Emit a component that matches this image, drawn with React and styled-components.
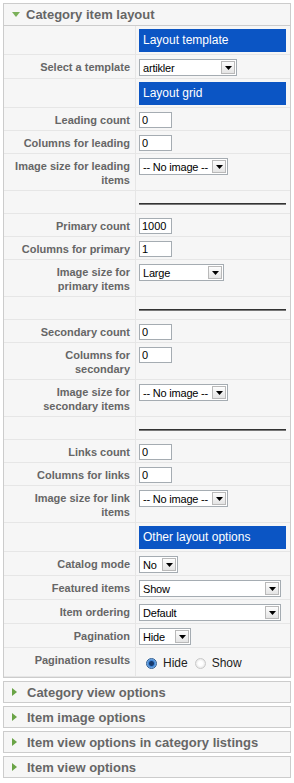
import styled, { createGlobalStyle } from 'styled-components';

const GlobalStyle = createGlobalStyle`
  body {
    margin: 3px;
    background: #fff;
    font-family: "Liberation Sans", Arial, sans-serif;
    font-size: 11px;
    color: #333;
  }
`;

const Panel = styled.div`
  border: 1px solid #ccc;
  margin-bottom: 3px;
  background: #f6f6f6;
`;

const PanelTitle = styled.h3`
  margin: 0;
  height: ${(p) => (p.$open ? '21px' : '20px')};
  display: flex;
  align-items: center;
  gap: ${(p) => (p.$open ? '6px' : '10px')};
  padding-left: 8px;
  font-size: 13px;
  font-weight: bold;
  color: #666;
  border-bottom: ${(p) => (p.$open ? '1px solid #ccc' : 'none')};
`;

const Row = styled.div`
  display: flex;
`;

const Key = styled.div`
  width: 126px;
  flex-shrink: 0;
  padding: 5px 5px 3px 0;
  text-align: right;
  font-weight: bold;
  color: #666;
  line-height: 14px;
  white-space: pre-line;
  border-right: 1px solid #e6e6e6;
  border-bottom: 1px solid #e6e6e6;
`;

const Value = styled.div`
  flex: 1;
  min-width: 0;
  padding: ${(p) => (p.$bar ? '3px 4px 2px 3px' : '4px 4px 2px 3px')};
  border-bottom: 1px solid #e6e6e6;
`;

const SectionBar = styled.div`
  height: 23px;
  line-height: 23px;
  padding-left: 4px;
  background: #0b55c4;
  color: #fff;
  font-size: 12px;
`;

const Rule = styled.div`
  margin-top: 8px;
  height: 0;
  border-top: 1px solid #333;
  border-bottom: 1px solid #777;
`;

const TextInput = styled.input`
  box-sizing: border-box;
  width: 33px;
  height: 16px;
  margin: 0;
  padding: 0 2px;
  border: 1px solid #a5acb2;
  background: #fff;
  font-family: "Liberation Sans", Arial, sans-serif;
  font-size: 11px;
  color: #000;
  outline: none;
`;

const SelectBox = styled.div`
  box-sizing: border-box;
  display: flex;
  align-items: center;
  width: ${(p) => p.$w}px;
  height: 17px;
  padding: 1px;
  border: 1px solid #a5acb2;
  background: #fff;
`;

const SelectText = styled.span`
  flex: 1;
  padding-left: 2px;
  font-size: 11px;
  letter-spacing: -0.2px;
  color: #000;
  white-space: nowrap;
  overflow: hidden;
`;

const SelectButton = styled.span`
  box-sizing: border-box;
  flex-shrink: 0;
  width: 14px;
  height: 13px;
  margin-left: 1px;
  display: flex;
  align-items: center;
  justify-content: center;
  border: 1px solid #b9b9b9;
  background: linear-gradient(#fdfdfd, #e4e4e4);
`;

const RadioGroup = styled.div`
  display: flex;
  align-items: center;
  padding: 4px 0 4px 7px;
  font-size: 12px;
  color: #222;
`;

const RadioItem = styled.label`
  display: flex;
  align-items: center;
  gap: 6px;
  margin-right: 7px;
`;

const RadioDot = styled.span`
  box-sizing: border-box;
  width: 11px;
  height: 11px;
  border-radius: 50%;
  border: 1px solid ${(p) => (p.$checked ? '#2d5d94' : '#c9c9c9')};
  background: ${(p) =>
    p.$checked
      ? 'radial-gradient(circle, #173a6c 0 2px, #3b82d4 3px, #9cc6ee 5px)'
      : 'radial-gradient(circle, #fff 0 2px, #e6e6e6 5px)'};
`;

function Arrow() {
  return (
    <svg width="7" height="4" viewBox="0 0 7 4">
      <polygon points="0,0 7,0 3.5,4" fill="#000" />
    </svg>
  );
}

function Select({ value, width }) {
  return (
    <SelectBox $w={width}>
      <SelectText>{value}</SelectText>
      <SelectButton>
        <Arrow />
      </SelectButton>
    </SelectBox>
  );
}

function Toggler({ open }) {
  return open ? (
    <svg width="8" height="5" viewBox="0 0 8 5">
      <polygon points="0,0 8,0 4,5" fill="#7bb05a" />
    </svg>
  ) : (
    <svg width="5" height="8" viewBox="0 0 5 8">
      <polygon points="0,0 5,4 0,8" fill="#6aa446" />
    </svg>
  );
}

const rows = [
  { type: 'bar', text: 'Layout template' },
  { type: 'select', label: 'Select a template', value: 'artikler', w: 98 },
  { type: 'bar', text: 'Layout grid' },
  { type: 'text', label: 'Leading count', value: '0' },
  { type: 'text', label: 'Columns for leading', value: '0' },
  { type: 'select', label: 'Image size for leading\nitems', value: '-- No image --', w: 89 },
  { type: 'rule' },
  { type: 'text', label: 'Primary count', value: '1000' },
  { type: 'text', label: 'Columns for primary', value: '1' },
  { type: 'select', label: 'Image size for\nprimary items', value: 'Large', w: 85 },
  { type: 'rule' },
  { type: 'text', label: 'Secondary count', value: '0' },
  { type: 'text', label: 'Columns for\nsecondary', value: '0' },
  { type: 'select', label: 'Image size for\nsecondary items', value: '-- No image --', w: 89 },
  { type: 'rule' },
  { type: 'text', label: 'Links count', value: '0' },
  { type: 'text', label: 'Columns for links', value: '0' },
  { type: 'select', label: 'Image size for link\nitems', value: '-- No image --', w: 89 },
  { type: 'bar', text: 'Other layout options' },
  { type: 'select', label: 'Catalog mode', value: 'No', w: 39 },
  { type: 'select', label: 'Featured items', value: 'Show', w: 142 },
  { type: 'select', label: 'Item ordering', value: 'Default', w: 142 },
  { type: 'select', label: 'Pagination', value: 'Hide', w: 52 },
  { type: 'radio', label: 'Pagination results' },
];

const collapsed = [
  'Category view options',
  'Item image options',
  'Item view options in category listings',
  'Item view options',
];

function ParamRow({ row }) {
  let content = null;
  if (row.type === 'bar') content = <SectionBar>{row.text}</SectionBar>;
  if (row.type === 'rule') content = <Rule />;
  if (row.type === 'text') content = <TextInput defaultValue={row.value} readOnly />;
  if (row.type === 'select') content = <Select value={row.value} width={row.w} />;
  if (row.type === 'radio')
    content = (
      <RadioGroup>
        <RadioItem>
          <RadioDot $checked />
          Hide
        </RadioItem>
        <RadioItem>
          <RadioDot />
          Show
        </RadioItem>
      </RadioGroup>
    );

  return (
    <Row>
      <Key>{row.label || '\u00a0'}</Key>
      <Value $bar={row.type === 'bar'}>{content}</Value>
    </Row>
  );
}

export default function App() {
  return (
    <>
      <GlobalStyle />
      <Panel>
        <PanelTitle $open>
          <Toggler open />
          Category item layout
        </PanelTitle>
        {rows.map((row, i) => (
          <ParamRow key={i} row={row} />
        ))}
      </Panel>
      {collapsed.map((title) => (
        <Panel key={title}>
          <PanelTitle>
            <Toggler />
            {title}
          </PanelTitle>
        </Panel>
      ))}
    </>
  );
}
